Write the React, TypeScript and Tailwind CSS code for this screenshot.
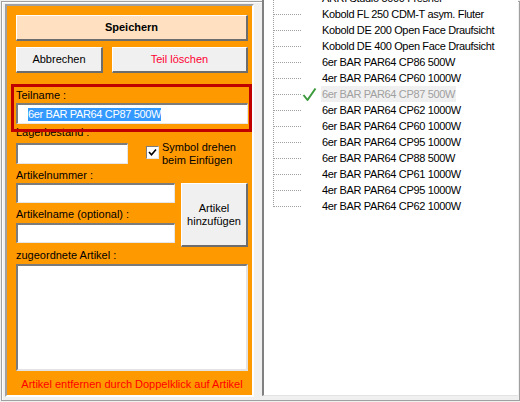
import React from 'react'

const font = "font-['Liberation_Sans',Arial,sans-serif]"

const treeRows = [
  'ARRI Studio 5000 Fresnel',
  'Kobold FL 250 CDM-T asym. Fluter',
  'Kobold DE 200 Open Face Draufsicht',
  'Kobold DE 400 Open Face Draufsicht',
  '6er BAR PAR64 CP86 500W',
  '4er BAR PAR64 CP60 1000W',
  '6er BAR PAR64 CP87 500W',
  '6er BAR PAR64 CP62 1000W',
  '6er BAR PAR64 CP60 1000W',
  '6er BAR PAR64 CP95 1000W',
  '6er BAR PAR64 CP88 500W',
  '4er BAR PAR64 CP61 1000W',
  '4er BAR PAR64 CP95 1000W',
  '4er BAR PAR64 CP62 1000W',
]
const selected = 6

function Connector({ last }: { last: boolean }) {
  return (
    <svg width="38" height="16" className="shrink-0" shapeRendering="crispEdges">
      <line x1="9.5" y1="0" x2="9.5" y2={last ? 8.5 : 16} stroke="#a0a0a0" strokeDasharray="1 1" />
      <line x1="10" y1="8.5" x2="37" y2="8.5" stroke="#a0a0a0" strokeDasharray="1 1" />
    </svg>
  )
}

function Check() {
  return (
    <svg width="19" height="16" className="shrink-0">
      <path d="M1.5 9 L5.5 14 L13.5 2.5" fill="none" stroke="#3c9a3c" strokeWidth="2" strokeLinejoin="round" />
    </svg>
  )
}

function Field({ className = '', children }: { className?: string; children?: React.ReactNode }) {
  return (
    <div
      className={`bg-white border-t-2 border-l-2 border-r border-b border-t-[#7c7c7c] border-l-[#7c7c7c] border-r-[#e6e6e6] border-b-[#e6e6e6] ${className}`}
    >
      {children}
    </div>
  )
}

function Btn({ className = '', children }: { className?: string; children: React.ReactNode }) {
  return (
    <div
      className={`flex items-center justify-center text-center border-t border-l border-t-white border-l-white border-r-2 border-b-2 border-r-[#6d6d6d] border-b-[#6d6d6d] ${className}`}
    >
      {children}
    </div>
  )
}

export default function App() {
  return (
    <div className={`w-[520px] h-[402px] bg-[#f0f0f0] pl-px pt-px overflow-hidden text-[11px] text-black ${font}`}>
      <div className="w-[519px] h-[400px] border border-[#a0a0a0]">
        <div className="h-full border-t border-l border-white flex">
          {/* Orange panel */}
          <div className="ml-[2px] mt-px w-[249px] h-[393px] border-2 border-t-[#a0a0a0] border-l-[#a0a0a0] border-r-white border-b-white bg-[#ff9900] pt-[9px] pl-[9px] pr-[4px] flex flex-col">
            <Btn className="h-[26px] w-[232px] bg-[#ffe0c0] font-bold">Speichern</Btn>
            <div className="mt-[6px] flex gap-[9px]">
              <Btn className="h-[26px] w-[87px] bg-[#f0f0f0]">Abbrechen</Btn>
              <Btn className="h-[26px] w-[136px] bg-[#f0f0f0] text-[#ff0033]">Teil löschen</Btn>
            </div>

            <div className="relative z-10 mt-[11px] -ml-[5px] w-[241px] h-[48px] border-[3px] border-[#c00000] pt-[2px] pl-[2px]">
              <div className="leading-[13px]">Teilname :</div>
              <Field className="mt-px h-[21px] w-[232px] flex items-center pl-[10px]">
                <span className="bg-[#3399ff] text-white text-[11px] tracking-[-0.35px] leading-[13px]">6er BAR PAR64 CP87 500W</span>
              </Field>
            </div>
            <div className="-mt-[6px] leading-[13px]">Lagerbestand :</div>

            <div className="flex items-start">
              <Field className="mt-[4px] h-[21px] w-[112px]" />
              <div className="ml-[18px] mt-[2px] flex items-start">
                <div className="mt-[5px] w-[13px] h-[13px] bg-white border-t border-l border-t-[#7c7c7c] border-l-[#7c7c7c] border-r border-b border-r-[#e6e6e6] border-b-[#e6e6e6] flex items-center justify-center">
                  <svg width="9" height="9" viewBox="0 0 9 9">
                    <path d="M1 4 L3.5 6.8 L8 1.5" fill="none" stroke="#000" strokeWidth="1.6" />
                  </svg>
                </div>
                <div className="ml-[3px] leading-[13px]">
                  Symbol drehen
                  <br />
                  beim Einfügen
                </div>
              </div>
            </div>

            <div className="mt-[2px] leading-[13px]">Artikelnummer :</div>
            <div className="mt-px flex gap-[6px]">
              <div className="flex flex-col w-[159px]">
                <Field className="h-[20px]" />
                <div className="mt-[5px] leading-[13px]">Artikelname (optional) :</div>
                <Field className="mt-[2px] h-[20px]" />
              </div>
              <Btn className="h-[64px] w-[67px] bg-[#f0f0f0] leading-[13px]">
                Artikel
                <br />
                hinzufügen
              </Btn>
            </div>

            <div className="mt-[2px] leading-[13px]">zugeordnete Artikel :</div>
            <div className="mt-[2px] h-[107px] w-[232px] bg-white border-t-2 border-l-2 border-t-[#7a7a7a] border-l-[#7a7a7a] border-r-2 border-b-2 border-r-[#e3e3e3] border-b-[#e3e3e3]" />
            <div className="mt-[7px] w-[232px] text-center leading-[13px] text-[#ff0000]">
              Artikel entfernen durch Doppelklick auf Artikel
            </div>
          </div>

          {/* Tree view */}
          <div className="ml-[8px] -mt-[3px] w-[256px] h-[396px] bg-white border-l-2 border-l-[#808080] border-b border-b-[#e3e3e3] overflow-hidden">
            <div className="-mt-[10px] flex flex-col">
              {treeRows.map((t, i) => (
                <div key={i} className="flex h-[16px] items-center">
                  <Connector last={i === treeRows.length - 1} />
                  {i === selected ? <Check /> : <div className="w-[19px] shrink-0" />}
                  <span
                    className={`h-[16px] leading-[16px] px-px text-[11px] tracking-[-0.35px] whitespace-nowrap ${
                      i === selected ? 'bg-[#f0f0f0] text-[#a0a0a0]' : 'text-black'
                    }`}
                  >
                    {t}
                  </span>
                </div>
              ))}
            </div>
          </div>
        </div>
      </div>
    </div>
  )
}
